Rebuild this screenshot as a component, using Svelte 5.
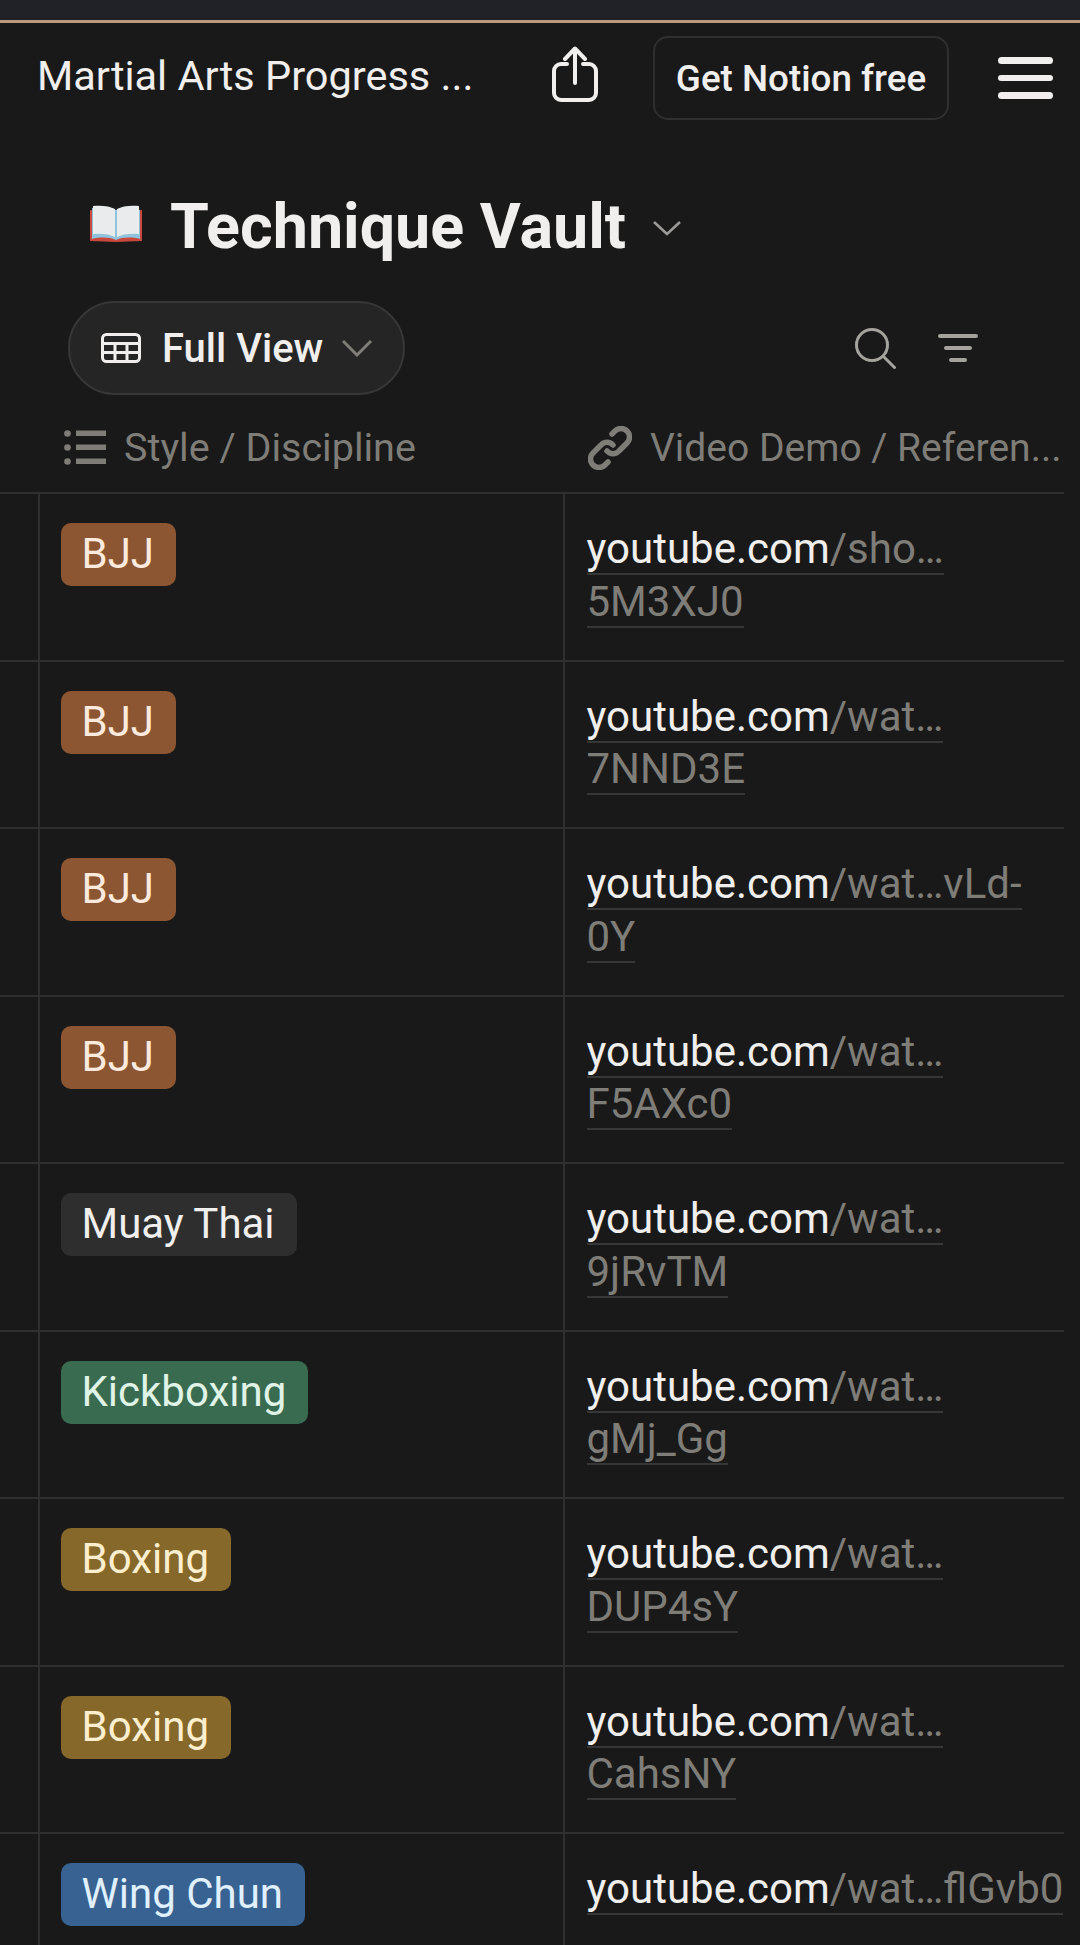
<script lang="ts">
  const tagColors = {
    BJJ: "brown",
    "Muay Thai": "gray",
    Kickboxing: "green",
    Boxing: "yellow",
    "Wing Chun": "blue",
  };

  const rows = [
    { tag: "BJJ", path: "/sho…", rest: "5M3XJ0" },
    { tag: "BJJ", path: "/wat…", rest: "7NND3E" },
    { tag: "BJJ", path: "/wat…vLd-", rest: "0Y" },
    { tag: "BJJ", path: "/wat…", rest: "F5AXc0" },
    { tag: "Muay Thai", path: "/wat…", rest: "9jRvTM" },
    { tag: "Kickboxing", path: "/wat…", rest: "gMj_Gg" },
    { tag: "Boxing", path: "/wat…", rest: "DUP4sY" },
    { tag: "Boxing", path: "/wat…", rest: "CahsNY" },
    { tag: "Wing Chun", path: "/wat…flGvb0", rest: "" },
  ];
</script>

<div class="page">
  <div class="strip"></div>

  <header class="topbar">
    <span class="crumb">Martial Arts Progress ...</span>
    <svg class="share" viewBox="0 0 46 56" fill="none" stroke="currentColor" stroke-width="4" stroke-linecap="round" stroke-linejoin="round">
      <path d="M15 18H9a7 7 0 0 0-7 7v22a7 7 0 0 0 7 7h28a7 7 0 0 0 7-7V25a7 7 0 0 0-7-7h-6" />
      <path d="M23 37V3M13 13L23 2.500l10 10.500" />
    </svg>
    <button class="get">Get Notion free</button>
    <div class="burger"><i></i><i></i><i></i></div>
  </header>

  <div class="title">
    <svg class="book" viewBox="0 0 54 38">
      <path d="M1 5l26 3 26-3v31l-26 1-26-1z" fill="#c9473c" />
      <path d="M3 3c8-2 17-2 24 2 7-4 16-4 24 0v29c-8-2-17-2-24 1-7-3-16-3-24-1z" fill="#8fc3dd" />
      <path d="M4 1c8-1 17 0 22 3v28c-5-3-14-4-22-3z" fill="#e9ebec" />
      <path d="M50 1c-8-1-17 0-22 3v28c5-3 14-4 22-3z" fill="#e9ebec" />
    </svg>
    <h1>Technique Vault</h1>
    <svg class="title-chev" viewBox="0 0 28 15" fill="none" stroke="currentColor" stroke-width="2.6">
      <path d="M1 1l13 12L27 1" />
    </svg>
  </div>

  <div class="toolbar">
    <div class="pill">
      <svg class="table-ico" viewBox="0 0 40 30" fill="none" stroke="currentColor" stroke-width="3">
        <rect x="1.500" y="1.500" width="37" height="27" rx="4" />
        <path d="M1 10.500h38M1 19.500h38M14 10.500v19M26 10.500v19" />
      </svg>
      <span>Full View</span>
      <svg class="pill-chev" viewBox="0 0 30 18" fill="none" stroke="currentColor" stroke-width="3">
        <path d="M1 2l14 14L29 2" />
      </svg>
    </div>
    <div class="tools">
      <svg class="search" viewBox="0 0 41 41" fill="none" stroke="currentColor" stroke-width="3" stroke-linecap="round">
        <circle cx="17" cy="17" r="15.500" />
        <path d="M28.500 28.500L39.500 39.500" />
      </svg>
      <svg class="filter" viewBox="0 0 40 28" fill="none" stroke="currentColor" stroke-width="4" stroke-linecap="round">
        <path d="M2 2h36M8 14h24M13 26h14" />
      </svg>
    </div>
  </div>

  <div class="head">
    <div class="hcell first">
      <svg class="list-ico" viewBox="0 0 42 35" fill="currentColor">
        <circle cx="3.500" cy="3.500" r="3.300" /><circle cx="3.500" cy="17.500" r="3.300" /><circle cx="3.500" cy="31.500" r="3.300" />
        <rect x="12" y="0.500" width="30" height="5.500" /><rect x="12" y="14.500" width="30" height="5.500" /><rect x="12" y="28.500" width="30" height="5.500" />
      </svg>
      <span class="style-label">Style / Discipline</span>
    </div>
    <div class="hcell second">
      <svg class="link-ico" viewBox="0 0 44 44" fill="none" stroke="currentColor" stroke-width="5.500" stroke-linecap="round">
        <path d="M19 25a8 8 0 0 0 12 0l8-8a8 8 0 0 0-12-12l-3 3" />
        <path d="M25 19a8 8 0 0 0-12 0l-8 8a8 8 0 0 0 12 12l3-3" />
      </svg>
      <span class="video-label">Video Demo / Referen...</span>
    </div>
  </div>

  <div class="table">
    {#each rows as row}
      <div class="row">
        <div class="cell tag-cell">
          <span class="tag {tagColors[row.tag]}">{row.tag}</span>
        </div>
        <div class="cell link-cell">
          <a href="#top"><span class="host">youtube.com</span>{row.path}{#if row.rest}<br />{row.rest}{/if}</a>
        </div>
      </div>
    {/each}
  </div>
</div>

<style>
  :global(body) {
    background: #191919;
    font-family: Roboto, "Liberation Sans", sans-serif;
  }
  .page {
    height: 1945px;
    overflow: hidden;
    background: #191919;
    color: #f0efed;
  }
  .strip {
    height: 20px;
    background: #202227;
    border-bottom: 3px solid #bd9a7e;
  }
  .topbar {
    display: flex;
    align-items: center;
    height: 106px;
    padding-top: 4px;
    padding-left: 37px;
    box-sizing: border-box;
  }
  .crumb {
    width: 515px;
    flex: none;
    font-size: 41.500px;
    padding-bottom: 5px;
  }
  .share {
    width: 46px;
    height: 56px;
    margin-top: -8px;
    flex: none;
    color: #f0efed;
  }
  .get {
    margin-left: 55px;
    width: 296px;
    height: 84px;
    flex: none;
    padding: 0;
    background: none;
    border: 2.500px solid #2f2f2f;
    border-radius: 15px;
    color: #f0efed;
    font: 500 36.800px Roboto, sans-serif;
  }
  .burger {
    margin-left: 49px;
    display: flex;
    flex-direction: column;
    gap: 11px;
    width: 55px;
  }
  .burger i {
    height: 6.500px;
    border-radius: 4px;
    background: #f0efed;
  }
  .title {
    display: flex;
    align-items: center;
    height: 122px;
    margin-top: 38px;
    padding-left: 89px;
  }
  .book {
    width: 54px;
    height: 38px;
    flex: none;
    margin-top: -8px;
  }
  h1 {
    margin: 0 0 2px 27px;
    font-size: 62.800px;
    font-weight: 700;
    line-height: 1;
  }
  .title-chev {
    width: 28px;
    height: 15px;
    margin-left: 27px;
    color: #9b9a97;
  }
  .toolbar {
    display: flex;
    align-items: center;
    justify-content: space-between;
    padding: 0 102px 0 68px;
    margin-top: 12px;
  }
  .pill {
    display: flex;
    align-items: center;
    width: 337px;
    height: 94px;
    box-sizing: border-box;
    padding-left: 31px;
    background: #252525;
    border: 2.500px solid #373737;
    border-radius: 47px;
    font-size: 40px;
    font-weight: 500;
  }
  .table-ico {
    width: 40px;
    height: 30px;
    flex: none;
  }
  .pill span {
    margin-left: 21px;
  }
  .pill-chev {
    width: 30px;
    height: 18px;
    margin-left: 19px;
    color: #7f7d78;
    flex: none;
  }
  .tools {
    display: flex;
    align-items: center;
    gap: 42px;
    color: #a5a39e;
  }
  .search {
    width: 41px;
    height: 41px;
  }
  .filter {
    width: 40px;
    height: 28px;
  }
  .head {
    display: flex;
    height: 99px;
    width: 1064px;
    box-sizing: border-box;
    border-bottom: 2.500px solid #2f2f2f;
    color: #7f7d78;
  }
  .hcell {
    display: flex;
    align-items: center;
    box-sizing: border-box;
    padding-top: 8px;
    white-space: nowrap;
  }
  .hcell.first {
    width: 587px;
    padding-left: 64px;
  }
  .hcell.second {
    padding-left: 1px;
  }
  .style-label {
    font-size: 39.500px;
  }
  .video-label {
    font-size: 39px;
    margin-left: -1px;
  }
  .list-ico {
    width: 42px;
    height: 35px;
    margin-right: 18px;
    flex: none;
  }
  .link-ico {
    width: 44px;
    height: 44px;
    margin-right: 19px;
    flex: none;
  }
  .table {
    width: 1064px;
  }
  .row {
    display: flex;
    height: 167.500px;
    box-sizing: border-box;
    padding-left: 37.500px;
    border-bottom: 2.500px solid #2f2f2f;
  }
  .cell {
    box-sizing: border-box;
    border-left: 2.500px solid #2f2f2f;
    height: 167.500px;
  }
  .tag-cell {
    width: 525px;
    padding: 29px 0 0 21px;
  }
  .link-cell {
    flex: 1;
    padding: 29px 0 0 22px;
    font-size: 42px;
    line-height: 52.500px;
    white-space: nowrap;
    color: #7f7d78;
  }
  a {
    color: inherit;
    text-decoration: none;
    border-bottom: 2.500px solid #373737;
  }
  .host {
    color: #f0efed;
  }
  .tag {
    display: inline-block;
    height: 63px;
    line-height: 61px;
    padding: 0 22px 0 21px;
    border-radius: 10px;
    font-size: 42px;
  }
  .brown {
    background: #8c5632;
    color: #fbeadd;
  }
  .gray {
    background: #2e2e2e;
    color: #f0efed;
  }
  .green {
    background: #386b4f;
    color: #e0f3e7;
  }
  .yellow {
    background: #86682a;
    color: #fcefcf;
  }
  .blue {
    background: #376291;
    color: #e0f0fd;
  }
</style>
